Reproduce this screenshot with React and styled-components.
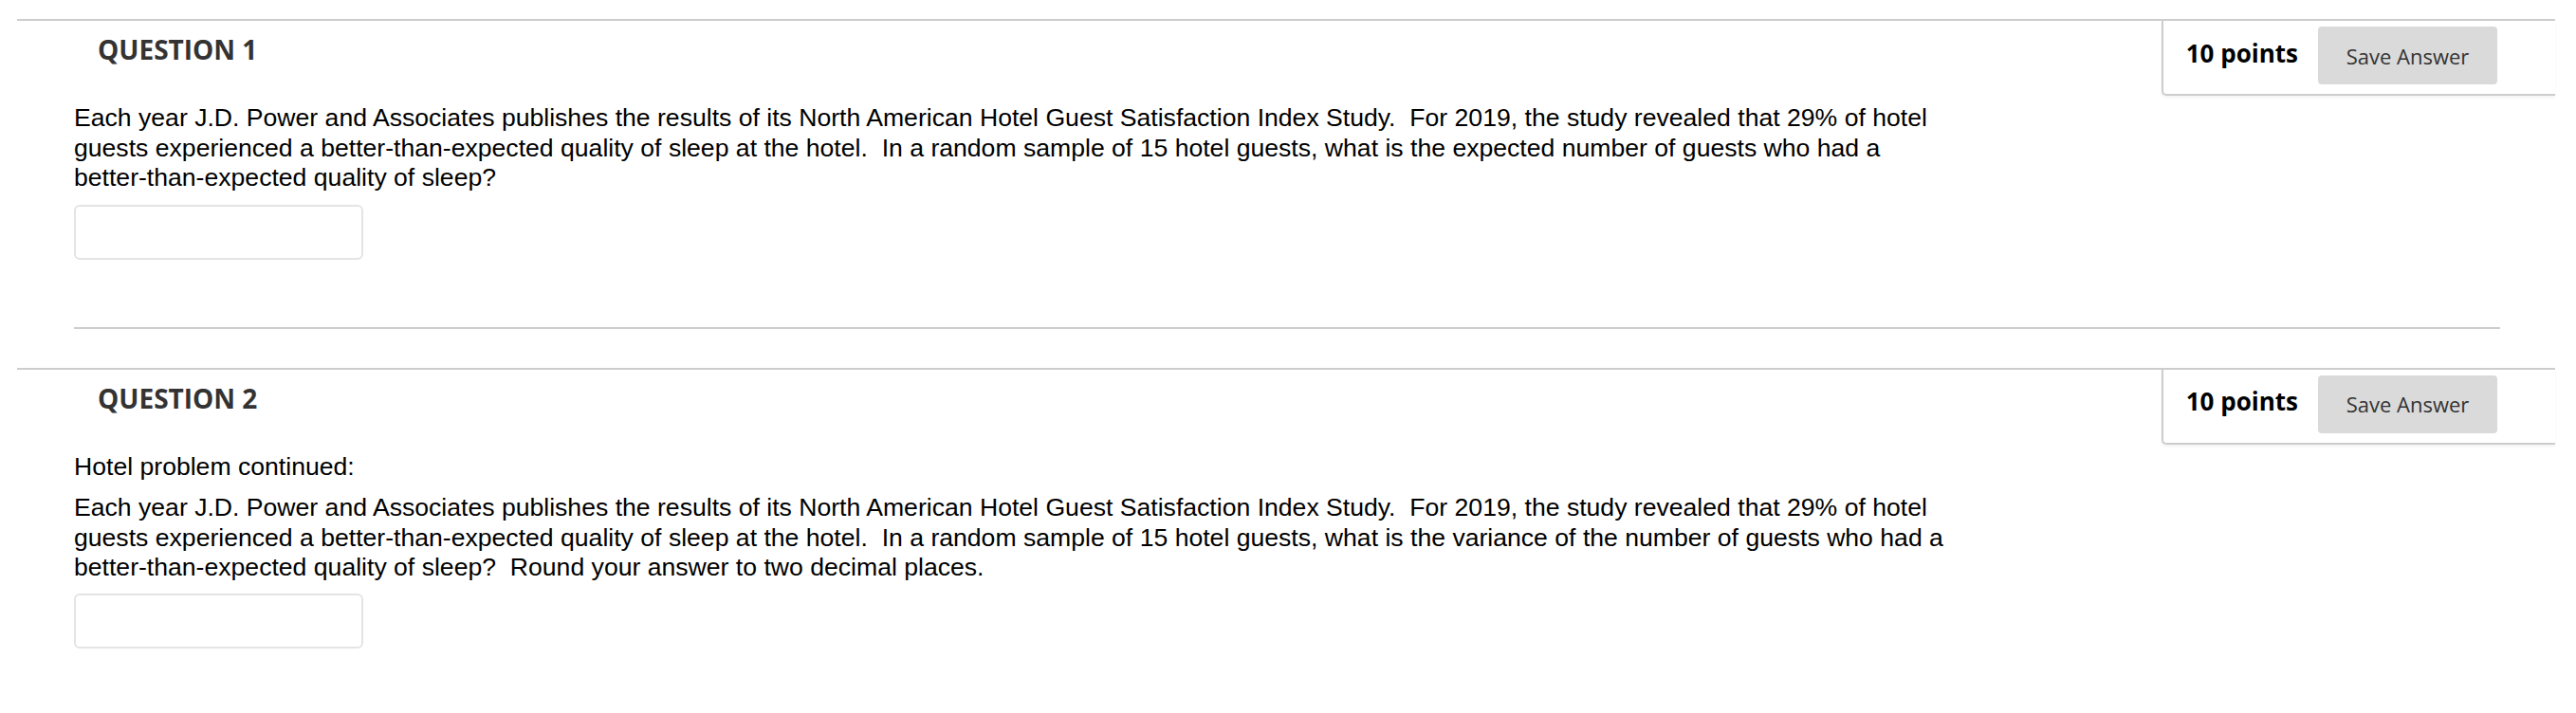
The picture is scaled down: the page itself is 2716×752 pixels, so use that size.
import styled, { createGlobalStyle } from "styled-components"

const GlobalStyle = createGlobalStyle`
    body {
        margin: 0;
        background-color: #ffffff;
    }
`

const questions = [
    {
        number: 1,
        points: 10,
        paragraphs: [
            "Each year J.D. Power and Associates publishes the results of its North American Hotel Guest Satisfaction Index Study.\u00a0 For 2019, the study revealed that 29% of hotel guests experienced a better-than-expected quality of sleep at the hotel.\u00a0 In a random sample of 15 hotel guests, what is the expected number of guests who had a better-than-expected quality of sleep?",
        ],
    },
    {
        number: 2,
        points: 10,
        paragraphs: [
            "Hotel problem continued:",
            "Each year J.D. Power and Associates publishes the results of its North American Hotel Guest Satisfaction Index Study.\u00a0 For 2019, the study revealed that 29% of hotel guests experienced a better-than-expected quality of sleep at the hotel.\u00a0 In a random sample of 15 hotel guests, what is the variance of the number of guests who had a better-than-expected quality of sleep?\u00a0 Round your answer to two decimal places.",
        ],
    },
]

// keep hyphenated words together, like the original page does
function renderText(text) {
    return text.split(" ").map((word, i, all) => {
        const sep = i < all.length - 1 ? " " : ""
        if (word.includes("-")) {
            return (
                <span key={i}>
                    <NoWrap>{word}</NoWrap>
                    {sep}
                </span>
            )
        }
        return word + sep
    })
}

export default function App() {
    return (
        <PageStyle>
            <GlobalStyle />
            <QuestionList>
                {questions.map((q) => (
                    <QuestionItem key={q.number}>
                        <HeaderRow>
                            <QuestionTitle>QUESTION {q.number}</QuestionTitle>
                            <PointsPanel>
                                <Points>{q.points} points</Points>
                                <SaveButton type="button">Save Answer</SaveButton>
                            </PointsPanel>
                        </HeaderRow>
                        <QuestionBody>
                            {q.paragraphs.map((p, i) => (
                                <QuestionText key={i}>{renderText(p)}</QuestionText>
                            ))}
                            <AnswerInput type="text" />
                        </QuestionBody>
                    </QuestionItem>
                ))}
            </QuestionList>
        </PageStyle>
    )
}

const PageStyle = styled.div`
    padding: 20px 22px 0 18px;
    background-color: #ffffff;
`

const QuestionList = styled.ul`
    list-style: none;
    margin: 0;
    padding: 0;
`

const QuestionItem = styled.li`
    border-top: 2px solid #cdcdcd;
    margin-bottom: 41px;
`

const HeaderRow = styled.div`
    display: flex;
    justify-content: space-between;
    align-items: flex-start;
`

const QuestionTitle = styled.h3`
    margin: 0;
    padding: 11px 0 0 85px;
    font-family: "Open Sans", sans-serif;
    font-weight: 700;
    font-size: 28px;
    line-height: normal;
    color: #333333;
`

const PointsPanel = styled.div`
    display: flex;
    align-items: center;
    gap: 21px;
    padding: 6px 61px 10px 24px;
    border-left: 2px solid #cdcdcd;
    border-bottom: 2px solid #cdcdcd;
    border-bottom-left-radius: 5px;
    box-shadow: 0 2px 3px rgba(0, 0, 0, 0.05);
`

const Points = styled.span`
    font-family: "Open Sans", sans-serif;
    font-weight: 700;
    font-size: 26px;
    color: #000000;
    margin-bottom: 6px;
`

const SaveButton = styled.button`
    width: 189px;
    height: 61px;
    border: none;
    border-radius: 4px;
    background-color: #dadada;
    font-family: "Open Sans", sans-serif;
    font-size: 22px;
    color: #333333;
    padding: 0;
`

const QuestionBody = styled.div`
    margin: 0 58px 0 60px;
    padding: 8px 0 71px 0;
    border-bottom: 2px solid #cdcdcd;
`

const QuestionText = styled.p`
    margin: 0 0 11.5px 0;
    max-width: 2012px;
    font-family: "Liberation Sans", Arial, sans-serif;
    font-size: 26.6px;
    line-height: 31.7px;
    color: #000000;
`

const NoWrap = styled.span`
    white-space: nowrap;
`

const AnswerInput = styled.input`
    display: block;
    box-sizing: border-box;
    width: 305px;
    height: 58px;
    margin: 0;
    border: 2px solid #e4e4e4;
    border-radius: 6px;
    background: #ffffff;
`
